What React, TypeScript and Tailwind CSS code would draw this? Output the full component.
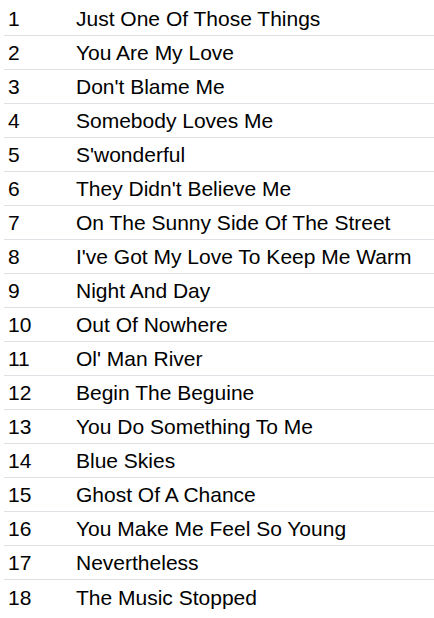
const songs = [
  'Just One Of Those Things',
  'You Are My Love',
  "Don't Blame Me",
  'Somebody Loves Me',
  "S'wonderful",
  "They Didn't Believe Me",
  'On The Sunny Side Of The Street',
  "I've Got My Love To Keep Me Warm",
  'Night And Day',
  'Out Of Nowhere',
  "Ol' Man River",
  'Begin The Beguine',
  'You Do Something To Me',
  'Blue Skies',
  'Ghost Of A Chance',
  'You Make Me Feel So Young',
  'Nevertheless',
  'The Music Stopped',
]

export default function App() {
  return (
    <div className="min-h-screen bg-white pt-[2px] pl-1 font-['Liberation_Sans',Arial,sans-serif] text-[21px] leading-none text-black">
      {songs.map((title, i) => (
        <div
          key={i}
          className="flex h-[34px] items-center border-b border-[#dee2e6] last:border-b-0"
        >
          <span className="w-[72px] pl-1">{i + 1}</span>
          <span>{title}</span>
        </div>
      ))}
    </div>
  )
}
